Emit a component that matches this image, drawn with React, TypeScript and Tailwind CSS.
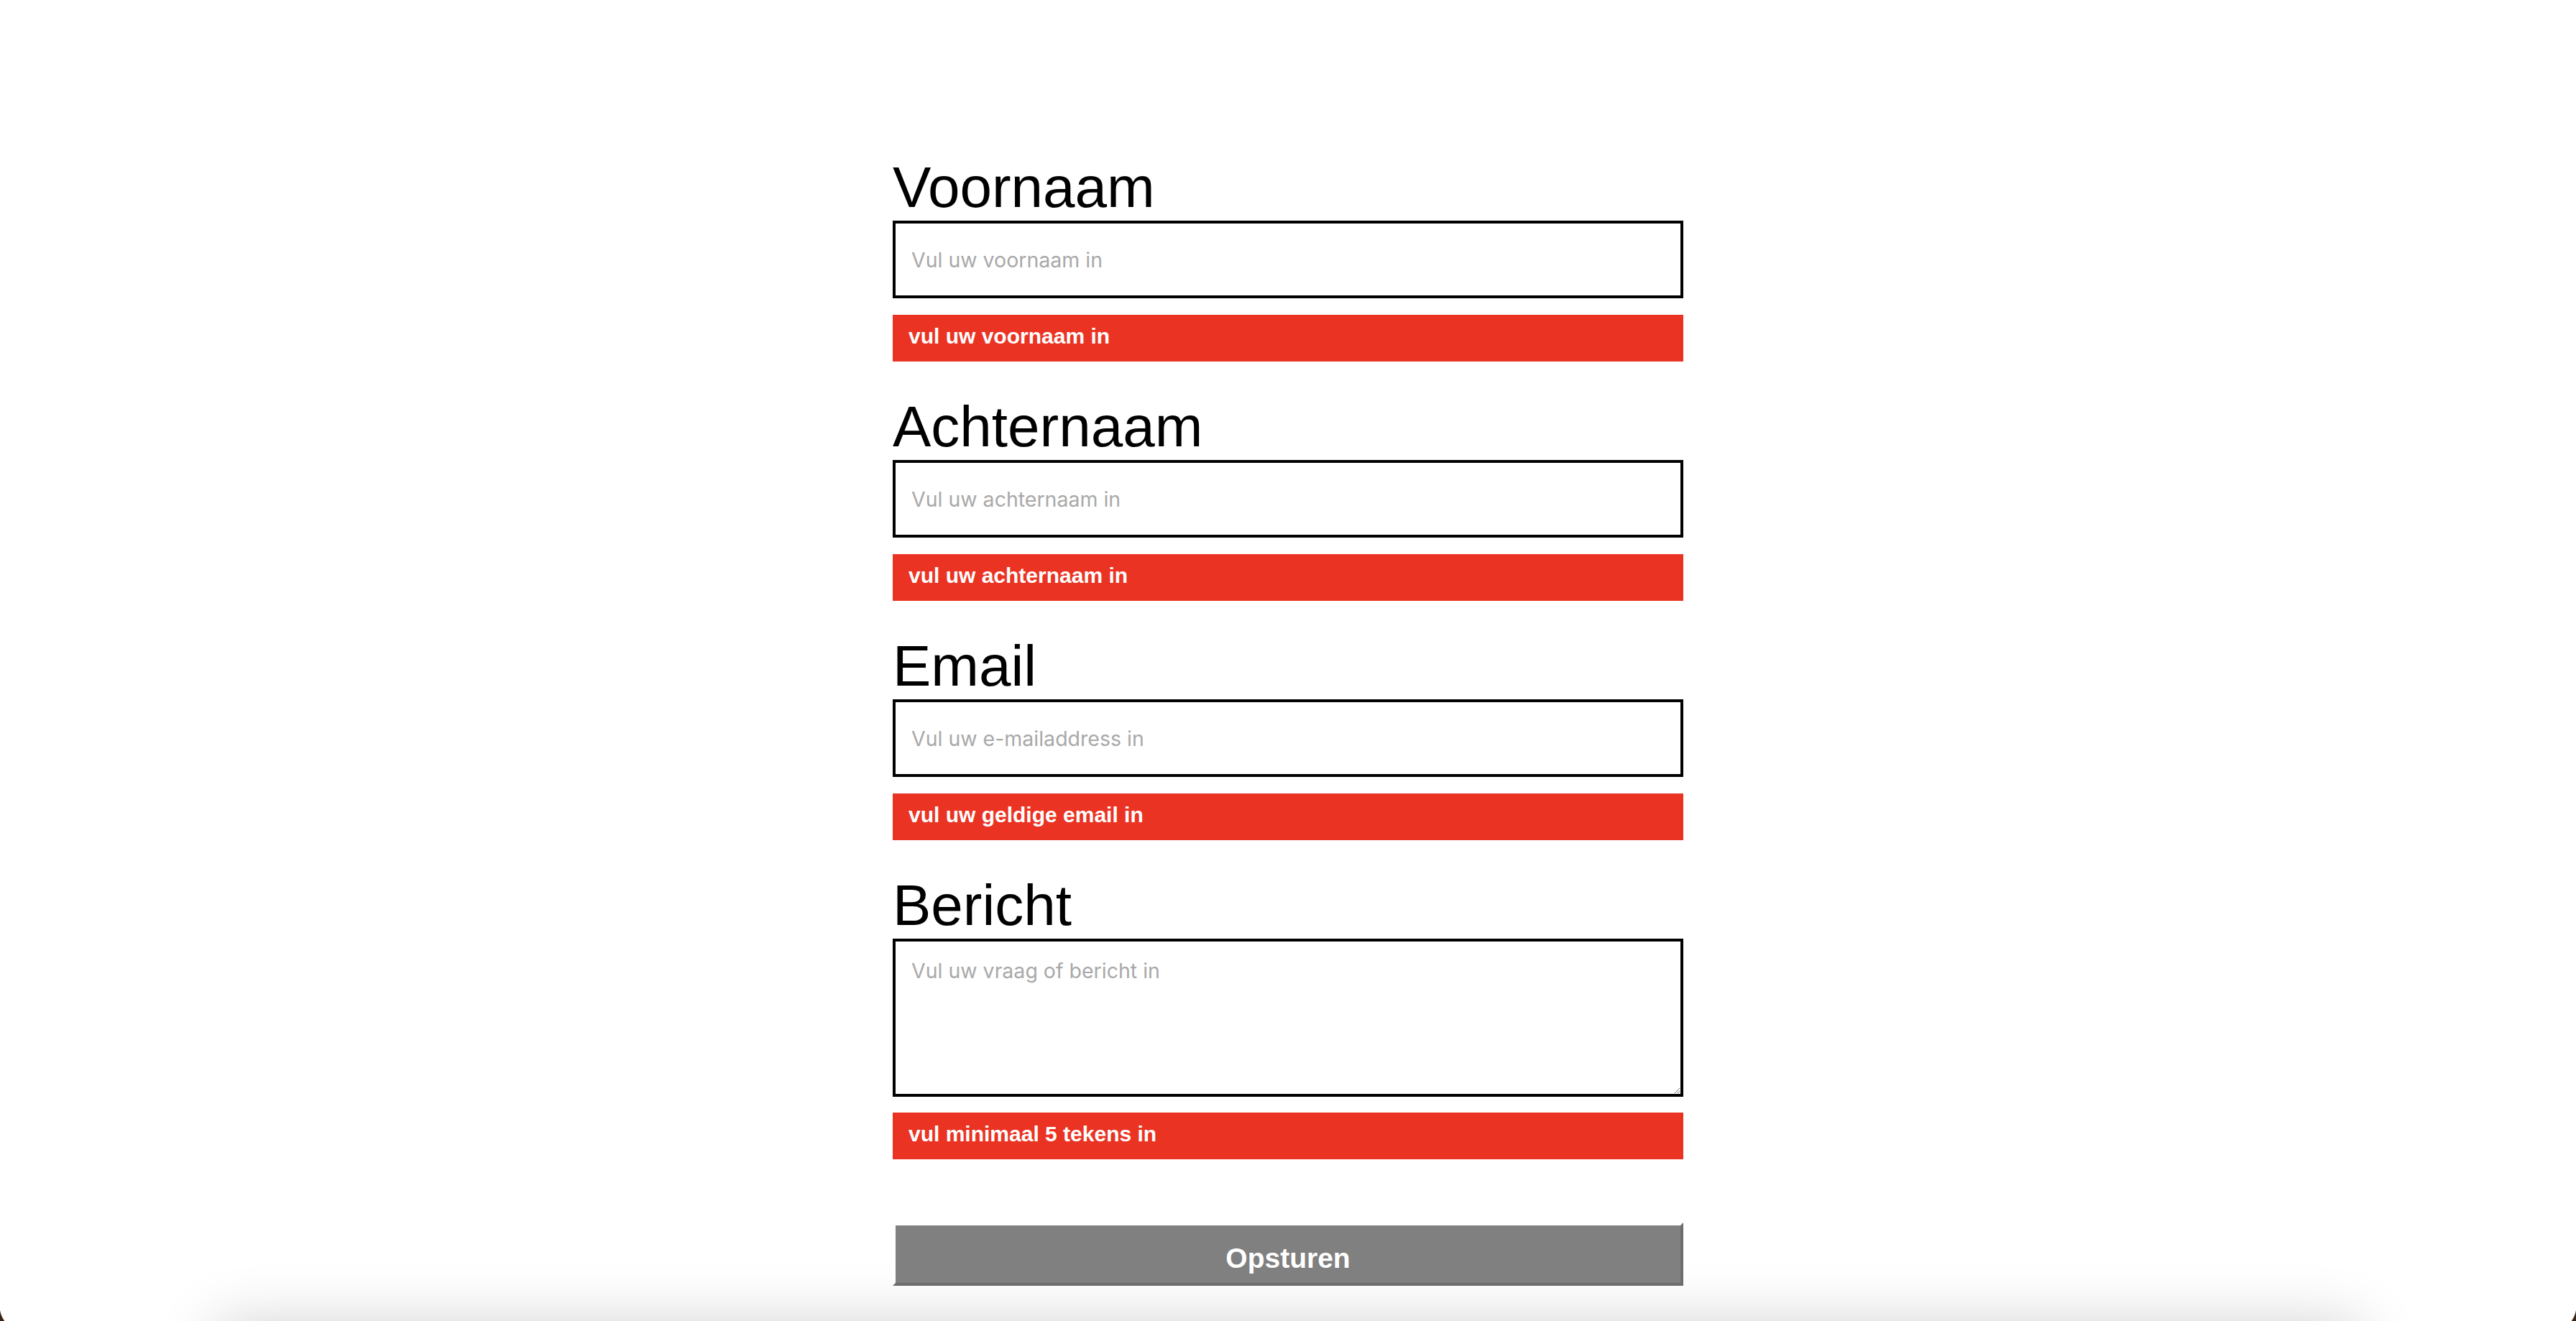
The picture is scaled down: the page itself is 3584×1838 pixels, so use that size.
import React from "react";

const fields = [
  { label: "Voornaam", placeholder: "Vul uw voornaam in", error: "vul uw voornaam in", type: "text" },
  { label: "Achternaam", placeholder: "Vul uw achternaam in", error: "vul uw achternaam in", type: "text" },
  { label: "Email", placeholder: "Vul uw e-mailaddress in", error: "vul uw geldige email in", type: "email" },
];

function ErrorBar({ text }: { text: string }) {
  return (
    <div className="h-[65px] bg-[#eb3323] pl-[22px] pt-[7px] font-['Liberation_Sans',Arial,sans-serif] text-[30px] font-bold text-white">
      {text}
    </div>
  );
}

export default function App() {
  return (
    <div className="relative min-h-screen bg-white font-['Liberation_Sans',Arial,sans-serif]">
      <form className="mx-auto flex w-[1100px] flex-col pt-[215px]" onSubmit={(e) => e.preventDefault()}>
        {fields.map((f) => (
          <div key={f.label} className="mb-[45px] flex flex-col">
            <label className="block text-[80px] leading-[92px] text-black">{f.label}</label>
            <input
              type={f.type}
              placeholder={f.placeholder}
              className="h-[108px] w-full border-4 border-black bg-white px-[22px] font-['Inter',sans-serif] text-[28.5px] text-black outline-none placeholder:text-[#a9a9a9]"
            />
            <div className="mt-[23px]">
              <ErrorBar text={f.error} />
            </div>
          </div>
        ))}

        <div className="flex flex-col">
          <label className="block text-[80px] leading-[92px] text-black">Bericht</label>
          <textarea
            placeholder="Vul uw vraag of bericht in"
            className="h-[220px] w-full border-4 border-black bg-white px-[22px] pt-[20px] font-['Inter',sans-serif] text-[28.5px] text-black outline-none placeholder:text-[#a9a9a9]"
          />
          <div className="mt-[22px]">
            <ErrorBar text="vul minimaal 5 tekens in" />
          </div>
        </div>

        <button
          type="submit"
          className="mt-[88px] h-[88px] w-full border-4 border-t-white border-l-white border-r-[#6d6d6d] border-b-[#6d6d6d] bg-[#808080] pt-[12px] text-[39px] font-bold text-white"
        >
          Opsturen
        </button>
      </form>

      {/* footer card below the fold, only its shadow shows */}
      <div className="mx-[300px] mt-[56px] h-[300px] bg-white shadow-[0_0_80px_rgba(0,0,0,0.2)]" />

      {/* window corners */}
      <div className="fixed bottom-0 left-0 h-[21px] w-[10px] bg-[radial-gradient(circle_at_35px_0px,transparent_35px,#3b2516_36px)]" />
      <div className="fixed bottom-0 right-0 h-[21px] w-[10px] bg-[radial-gradient(circle_at_-25px_0px,transparent_35px,#3b2516_36px)]" />
    </div>
  );
}
